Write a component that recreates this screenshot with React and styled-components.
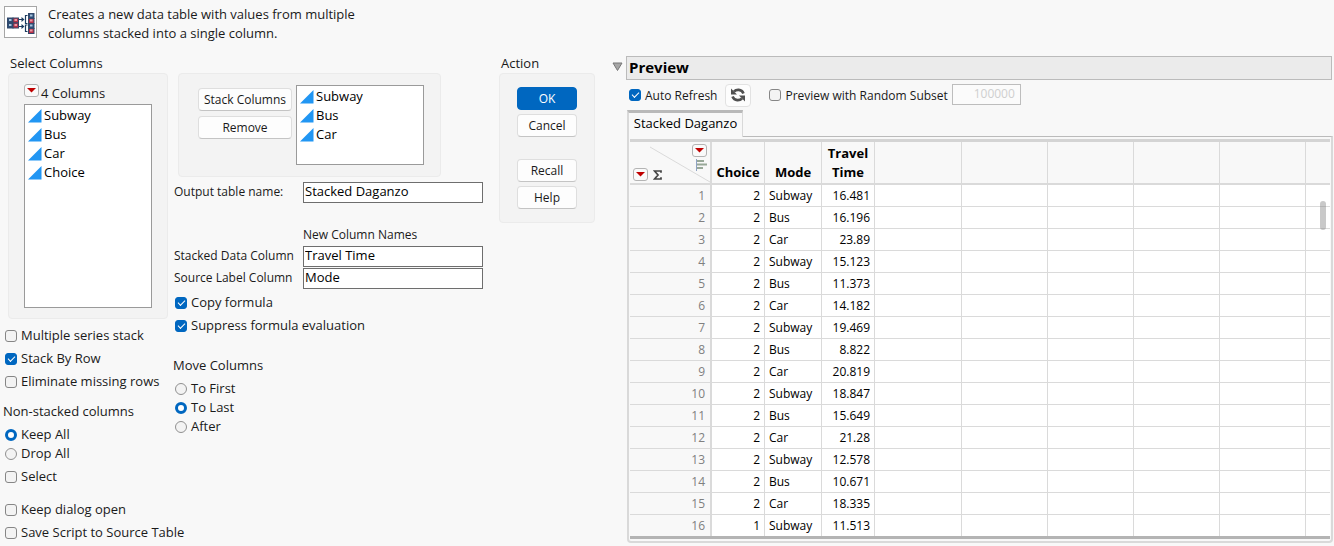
import React, { useId } from "react";
import styled, { createGlobalStyle, css } from "styled-components";

const GlobalStyle = createGlobalStyle`
  *, *::before, *::after { box-sizing: border-box; }
  body {
    margin: 0;
    background: #f8f8f8;
    color: #1a1a1a;
    font: 13px/19px "Open Sans", "Noto Sans", sans-serif;
  }
  button, input { font: inherit; color: inherit; margin: 0; }
`;

/* ---------- page ---------- */
const Page = styled.main`
  display: flex;
  align-items: flex-start;
`;
const Dialog = styled.section`
  flex: none;
  padding: 5px 0 0 3px;
`;
const Intro = styled.header`
  display: flex;
  gap: 11px;
  height: 49px;
  p { margin: 0; width: 310px; }
`;
const Logo = styled.div`
  width: 33px;
  height: 32px;
  margin: 1px 0 0 1px;
  border: 1px solid #a6a6a6;
  background: #fff;
  svg { display: block; }
`;
const Columns = styled.div`
  display: flex;
  align-items: flex-start;
`;
const LeftColumn = styled.div`
  width: 170px;
`;
const MiddleColumn = styled.div`
  width: 310px;
  padding-top: 19px;
`;
const ActionColumn = styled.div`
  width: 96px;
  margin-left: 16px;
`;
const Heading = styled.h2`
  margin: 0;
  font: inherit;
  font-weight: 500;
  white-space: nowrap;
  padding-left: ${(p) => p.$indent || 0}px;
`;
const Panel = styled.div`
  border: 1px solid #ebebeb;
  border-radius: 4px;
  background: #f3f3f3;
`;
const SourcePanel = styled(Panel)`
  margin-left: 5px;
  width: 160px;
  height: 246px;
  padding: 10px 15px;
`;
const StackPanel = styled(Panel)`
  display: flex;
  gap: 4px;
  margin-left: 5px;
  width: 263px;
  height: 104px;
  padding: 11px 16px 11px 19px;
`;
const ActionPanel = styled(Panel)`
  display: flex;
  flex-direction: column;
  align-items: center;
  gap: 4px;
  height: 150px;
  padding: 13px 0;
`;
const CountRow = styled.div`
  display: flex;
  gap: 2px;
  height: 20px;
`;
const List = styled.ul`
  list-style: none;
  margin: 0;
  padding: 1px 3px;
  width: 128px;
  height: ${(p) => p.$height}px;
  border: 1px solid #9a9a9a;
  background: #fff;
  color: #000;
`;
const Item = styled.li`
  display: flex;
  align-items: center;
  gap: 2px;
  svg { flex: none; }
`;
const ButtonStack = styled.div`
  display: flex;
  flex-direction: column;
  gap: 5px;
  padding-top: 3px;
`;
const Button = styled.button`
  width: ${(p) => p.$width || 60}px;
  height: 23px;
  padding: 1px 0 0;
  border: 1px solid #dedede;
  border-bottom-color: #c4c4c4;
  border-radius: 4px;
  background: #fdfdfd;
  font-size: 12px;
  line-height: 20px;
  white-space: nowrap;
  ${(p) => p.$primary && css`
    border-color: #0067c0;
    background: #0067c0;
    color: #fff;
  `}
`;
const Spacer = styled.div`
  height: ${(p) => p.$size}px;
`;

/* ---------- fields ---------- */
const FieldGrid = styled.div`
  display: grid;
  grid-template-columns: 129px 180px;
  row-gap: 1px;
  margin-left: 1px;
  font-size: 12px;
  white-space: nowrap;
`;
const GridCaption = styled.div`
  grid-column: 2;
  height: 20px;
`;
const TextInput = styled.input`
  width: 100%;
  height: 21px;
  padding: 0 1px 4px;
  border: 1px solid #6e6e6e;
  background: #fff;
  color: #000;
  font-size: 13px;
`;
const SubsetInput = styled(TextInput)`
  width: 69px;
  padding: 0 5px 2px;
  border-color: #bdbdbd;
  background: #fbfbfb;
  color: #cfcfcf;
  font-size: 12px;
  text-align: right;
`;
const Choice = styled.label`
  display: flex;
  align-items: center;
  gap: 4px;
  height: 19px;
  margin-left: 2px;
  white-space: nowrap;
`;
const Checkbox = styled.input.attrs({ type: "checkbox" })`
  appearance: none;
  display: grid;
  place-items: center;
  flex: none;
  width: 12px;
  height: 12px;
  border: 1px solid #868686;
  border-radius: 3px;
  background: #f3f3f3;
  &:checked { background: #0067c0; border-color: #0067c0; }
  &:checked::after {
    content: "";
    width: 7px;
    height: 4px;
    margin-bottom: 2px;
    border: solid #fff;
    border-width: 0 0 1px 1px;
    transform: rotate(-45deg);
  }
`;
const Radio = styled.input.attrs({ type: "radio" })`
  appearance: none;
  flex: none;
  width: 12px;
  height: 12px;
  border: 1px solid #909090;
  border-radius: 50%;
  background: #f3f3f3;
  &:checked { border: 3px solid #0067c0; background: #fff; }
`;
const ChoiceGroup = styled.div`
  display: flex;
  flex-direction: column;
  gap: ${(p) => p.$gap || 0}px;
`;

/* ---------- preview ---------- */
const Preview = styled.section`
  flex: 1;
  min-width: 0;
  margin: 56px 1px 0 17px;
`;
const TitleRow = styled.div`
  display: flex;
  gap: 3px;
  margin-right: 1px;
`;
const Disclosure = styled.button`
  width: 11px;
  height: 22px;
  padding: 0;
  border: 0;
  background: none;
  svg { display: block; }
`;
const Title = styled.h1`
  flex: 1;
  margin: 0;
  height: 24px;
  padding-left: 2px;
  border: 1px solid #bbb;
  background: #ebebeb;
  color: #000;
  font-size: 15px;
  font-weight: 700;
  line-height: 21px;
`;
const PreviewBody = styled.div`
  margin-left: 15px;
`;
const Toolbar = styled.div`
  display: flex;
  align-items: center;
  height: 30px;
  font-size: 12px;
`;
const RefreshButton = styled(Button)`
  display: grid;
  place-items: center;
  width: 26px;
  padding: 0;
  margin: 0 16px 0 8px;
  border-color: #e2e2e2;
`;
const SubsetField = styled.div`
  display: flex;
  gap: 4px;
  align-items: flex-end;
  height: 19px;
`;
const Tab = styled.button`
  display: block;
  position: relative;
  z-index: 1;
  width: 116px;
  height: 27px;
  margin-bottom: -1px;
  padding: 0 0 3px;
  border: 2px solid #d9d9d9;
  border-top: 3px solid #b9b9b9;
  border-bottom: 0;
  border-right-width: 1px;
  background: #f8f8f8;
  color: #000;
`;
const Frame = styled.div`
  position: relative;
  border: 2px solid #d9d9d9;
  border-top: 1px solid #bbb;
  border-radius: 0 0 4px 4px;
  padding: 2px 1px 2px;
`;
const Grid = styled.table`
  width: 100%;
  table-layout: fixed;
  border-collapse: separate;
  border-spacing: 0;
  border-top: 3px solid #d4d4d4;
  border-bottom: 3px solid #b4b4b4;
  background: #fff;
  color: #000;
`;
const Col = styled.col`
  width: ${(p) => (p.$width ? p.$width + "px" : "auto")};
`;
const HeadCell = styled.th`
  height: 43px;
  padding: 0 0 1px;
  vertical-align: bottom;
  border-right: 1px solid #dadada;
  border-bottom: 2px solid #dadada;
  background: #f8f8f8;
  font-weight: 700;
  &:last-child { border-right: 0; }
`;
const Corner = styled(HeadCell)`
  position: relative;
  padding: 0;
  border-right-width: 2px;
`;
const CornerTools = styled.div`
  position: relative;
  display: flex;
  justify-content: space-between;
  height: 41px;
  padding: 2px 3px;
`;
const Diagonal = styled.svg`
  position: absolute;
  inset: 0;
`;
const CornerLeft = styled.div`
  display: flex;
  align-items: center;
  align-self: flex-end;
  gap: 5px;
  svg { display: block; }
`;
const CornerRight = styled.div`
  display: flex;
  flex-direction: column;
  align-items: flex-end;
  gap: 2px;
  svg { display: block; }
`;
const Cell = styled.td`
  height: 22px;
  padding: 0 4px;
  border-right: 1px solid #dadada;
  border-bottom: 1px solid #dadada;
  font-size: 12px;
  line-height: 19px;
  text-align: ${(p) => (p.$text ? "left" : "right")};
  &:last-child { border-right: 0; }
  tr:last-child > & { height: 21px; border-bottom: 0; }
`;
const RowNumber = styled(Cell).attrs({ as: "th", scope: "row" })`
  padding-right: 5px;
  border-right: 2px solid #dadada;
  background: #f8f8f8;
  color: #808080;
  font-weight: 400;
`;
const ScrollThumb = styled.div`
  position: absolute;
  top: 64px;
  right: 5px;
  width: 6px;
  height: 29px;
  border-radius: 3px;
  background: rgba(120, 120, 120, 0.4);
`;
const MenuButton = styled.button`
  display: grid;
  place-items: center;
  flex: none;
  width: 15px;
  height: 13px;
  padding: 0;
  border: 1px solid #b4b4b4;
  border-radius: 3px;
  background: #fafafa;
`;

/* ---------- drawings ---------- */
function RedMenu({ label }) {
  return (
    <MenuButton type="button" aria-label={label}>
      <svg width="9" height="5" viewBox="0 0 9 5"><path d="M0 0h9L4.500 4.500z" fill="#c00000" /></svg>
    </MenuButton>
  );
}

function StackLogo() {
  const cell = (x, y, fill, light) => (
    <g key={x + "-" + y}>
      <rect x={x} y={y} width="5.500" height="5" fill={fill} stroke="#33486a" strokeWidth="1" />
      <rect x={x + 1.500} y={y + 1} width="2.500" height="2" fill={light} />
    </g>
  );
  const blue = ["#2d4f78", "#a9c3da"];
  const red = ["#b93046", "#e99aa6"];
  return (
    <svg width="31" height="30" viewBox="0 0 31 30">
      {cell(2.500, 11, ...blue)}
      {cell(2.500, 16, ...blue)}
      {cell(8, 11, ...red)}
      {cell(8, 16, ...red)}
      {cell(23.500, 6.500, ...blue)}
      {cell(23.500, 11.500, ...red)}
      {cell(23.500, 16.500, ...blue)}
      {cell(23.500, 21.500, ...red)}
      <path d="M14 12.500h5M14 19.500h5M22.500 8.500h-2v8h2M22.500 18h-2v6.500h2" fill="none" stroke="#1c3c60" strokeWidth="1.200" />
      <path d="M16.500 10l3 2.500-3 2.500zM16.500 17l3 2.500-3 2.500z" fill="#1c3c60" />
    </svg>
  );
}

function ContinuousIcon() {
  return (
    <svg width="14" height="14" viewBox="0 0 14 14">
      <path d="M0 13.500L13.500 0v13.500z" fill="#2196f3" />
    </svg>
  );
}

function RefreshIcon() {
  return (
    <svg width="16" height="16" viewBox="0 0 16 16">
      <path d="M4 4.500C6 2.500 11.500 1.500 13.500 6.500" fill="none" stroke="#505050" strokeWidth="2.600" />
      <path d="M1 1.500v6h6z" fill="#505050" />
      <path d="M12 11.500C10 13.500 4.500 14.500 2.500 9.500" fill="none" stroke="#505050" strokeWidth="2.600" />
      <path d="M15 14.500v-6H9z" fill="#505050" />
    </svg>
  );
}

function BarsIcon() {
  return (
    <svg width="11" height="12" viewBox="0 0 11 12">
      <path d="M.5 0v12" stroke="#8fa3c4" />
      <path d="M1 2h7M1 5.500h10M1 9h6" stroke="#98a898" strokeWidth="2" />
    </svg>
  );
}

function SigmaIcon() {
  return (
    <svg width="9" height="10" viewBox="0 0 9 10">
      <path d="M8 2.800V1H1.500L5 5 1.500 9H8V7.200" fill="none" stroke="#444" strokeWidth="1.700" />
    </svg>
  );
}

/* ---------- small pieces ---------- */
function Option({ label, radio, name, on }) {
  return (
    <Choice>
      {radio ? <Radio name={name} defaultChecked={on} /> : <Checkbox defaultChecked={on} />}
      {label}
    </Choice>
  );
}

function Field({ label, value }) {
  const id = useId();
  return (
    <>
      <label htmlFor={id}>{label}</label>
      <TextInput id={id} defaultValue={value} />
    </>
  );
}

function ColumnList({ label, items, height }) {
  return (
    <List aria-label={label} $height={height}>
      {items.map((item) => (
        <Item key={item}><ContinuousIcon />{item}</Item>
      ))}
    </List>
  );
}

const rows = [
  [2, "Subway", "16.481"], [2, "Bus", "16.196"], [2, "Car", "23.89"],
  [2, "Subway", "15.123"], [2, "Bus", "11.373"], [2, "Car", "14.182"],
  [2, "Subway", "19.469"], [2, "Bus", "8.822"], [2, "Car", "20.819"],
  [2, "Subway", "18.847"], [2, "Bus", "15.649"], [2, "Car", "21.28"],
  [2, "Subway", "12.578"], [2, "Bus", "10.671"], [2, "Car", "18.335"],
  [1, "Subway", "11.513"],
];
const emptyColumns = [87, 86, 86, 86, 86, 0];

function DataGrid() {
  return (
    <Grid>
      <colgroup>
        <Col $width={82} />
        <Col $width={53} />
        <Col $width={57} />
        <Col $width={53} />
        {emptyColumns.map((width, i) => <Col key={i} $width={width} />)}
      </colgroup>
      <thead>
        <tr>
          <Corner>
            <CornerTools>
              <Diagonal width="80" height="41" aria-hidden="true">
                <path d="M20 5L80 40" stroke="#dadada" />
              </Diagonal>
              <CornerLeft><RedMenu label="Row options" /><SigmaIcon /></CornerLeft>
              <CornerRight><RedMenu label="Column options" /><BarsIcon /></CornerRight>
            </CornerTools>
          </Corner>
          <HeadCell>Choice</HeadCell>
          <HeadCell>Mode</HeadCell>
          <HeadCell>Travel<br />Time</HeadCell>
          {emptyColumns.map((_, i) => <HeadCell key={i} />)}
        </tr>
      </thead>
      <tbody>
        {rows.map(([choice, mode, time], n) => (
          <tr key={n}>
            <RowNumber>{n + 1}</RowNumber>
            <Cell>{choice}</Cell>
            <Cell $text>{mode}</Cell>
            <Cell>{time}</Cell>
            {emptyColumns.map((_, i) => <Cell key={i} />)}
          </tr>
        ))}
      </tbody>
    </Grid>
  );
}

export default function App() {
  return (
    <Page>
      <GlobalStyle />
      <Dialog>
        <Intro>
          <Logo><StackLogo /></Logo>
          <p>Creates a new data table with values from multiple<br />columns stacked into a single column.</p>
        </Intro>
        <Columns>
          <LeftColumn>
            <Heading $indent={7}>Select Columns</Heading>
            <SourcePanel>
              <CountRow><RedMenu label="Column list options" />4 Columns</CountRow>
              <ColumnList label="Columns" items={["Subway", "Bus", "Car", "Choice"]} height={204} />
            </SourcePanel>
            <Spacer $size={7} />
            <ChoiceGroup $gap={4}>
              <Option label="Multiple series stack" />
              <Option label="Stack By Row" on />
              <Option label="Eliminate missing rows" />
            </ChoiceGroup>
            <Spacer $size={11} />
            <div>Non-stacked columns</div>
            <Spacer $size={4} />
            <ChoiceGroup>
              <Option radio name="keep" label="Keep All" on />
              <Option radio name="keep" label="Drop All" />
            </ChoiceGroup>
            <Spacer $size={4} />
            <Option label="Select" />
            <Spacer $size={14} />
            <ChoiceGroup $gap={4}>
              <Option label="Keep dialog open" />
              <Option label="Save Script to Source Table" />
            </ChoiceGroup>
          </LeftColumn>
          <MiddleColumn>
            <StackPanel>
              <ButtonStack>
                <Button type="button" $width={94}>Stack Columns</Button>
                <Button type="button" $width={94}>Remove</Button>
              </ButtonStack>
              <ColumnList label="Stacked columns" items={["Subway", "Bus", "Car"]} height={80} />
            </StackPanel>
            <Spacer $size={5} />
            <FieldGrid>
              <Field label="Output table name:" value="Stacked Daganzo" />
            </FieldGrid>
            <Spacer $size={22} />
            <FieldGrid>
              <GridCaption>New Column Names</GridCaption>
              <Field label="Stacked Data Column" value="Travel Time" />
              <Field label="Source Label Column" value="Mode" />
            </FieldGrid>
            <Spacer $size={4} />
            <ChoiceGroup $gap={4}>
              <Option label="Copy formula" on />
              <Option label="Suppress formula evaluation" on />
            </ChoiceGroup>
            <Spacer $size={21} />
            <div>Move Columns</div>
            <Spacer $size={4} />
            <ChoiceGroup>
              <Option radio name="move" label="To First" />
              <Option radio name="move" label="To Last" on />
              <Option radio name="move" label="After" />
            </ChoiceGroup>
          </MiddleColumn>
          <ActionColumn>
            <Heading $indent={2}>Action</Heading>
            <ActionPanel>
              <Button type="button" $primary>OK</Button>
              <Button type="button">Cancel</Button>
              <Spacer $size={17} />
              <Button type="button">Recall</Button>
              <Button type="button">Help</Button>
            </ActionPanel>
          </ActionColumn>
        </Columns>
      </Dialog>
      <Preview>
        <TitleRow>
          <Disclosure type="button" aria-label="Collapse preview">
            <svg width="11" height="10" viewBox="0 0 11 10"><path d="M1 1h9L5.500 8.500z" fill="#a6a6a6" stroke="#777" /></svg>
          </Disclosure>
          <Title>Preview</Title>
        </TitleRow>
        <PreviewBody>
          <Toolbar>
            <Option label="Auto Refresh" on />
            <RefreshButton type="button" aria-label="Refresh"><RefreshIcon /></RefreshButton>
            <SubsetField>
              <Option label="Preview with Random Subset" />
              <SubsetInput aria-label="Random subset size" defaultValue="100000" disabled />
            </SubsetField>
          </Toolbar>
          <Tab type="button">Stacked Daganzo</Tab>
          <Frame>
            <DataGrid />
            <ScrollThumb />
          </Frame>
        </PreviewBody>
      </Preview>
    </Page>
  );
}
